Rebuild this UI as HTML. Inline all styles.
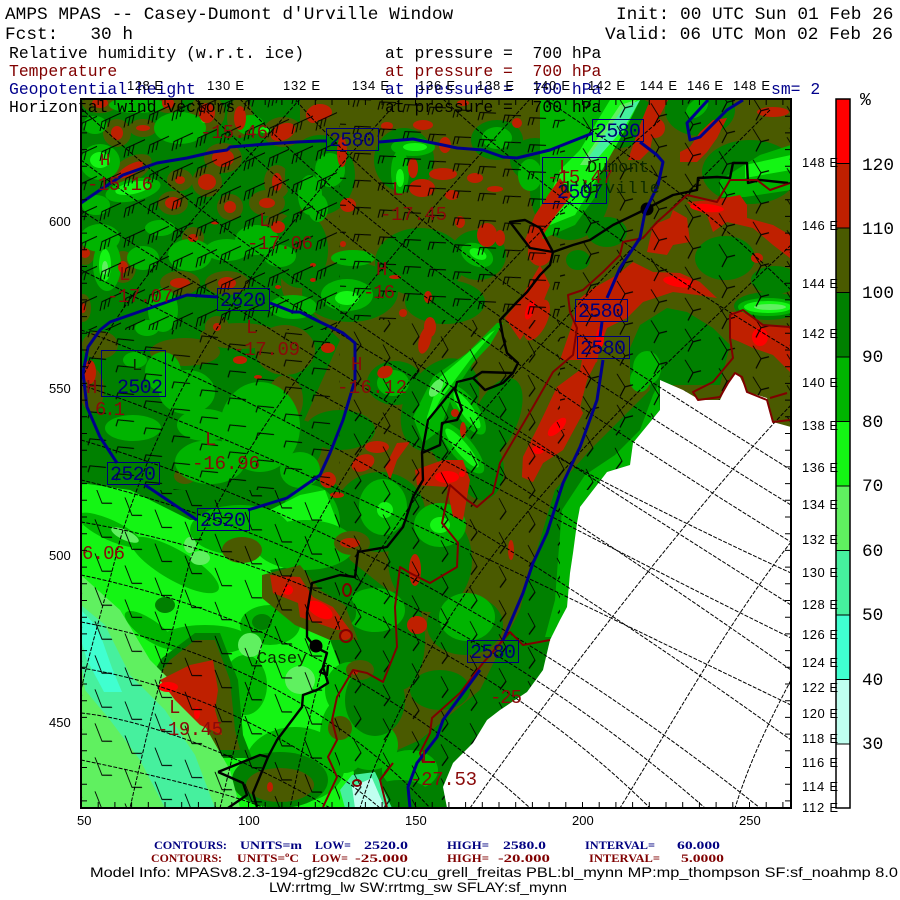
<!DOCTYPE html>
<html lang="en"><head><meta charset="utf-8"><title>AMPS MPAS</title>
<style>
html,body{margin:0;padding:0;background:#fff;width:900px;height:900px;overflow:hidden}
svg{display:block}
text{white-space:pre}
.m{font-family:"Liberation Mono",monospace}
.s{font-family:"Liberation Sans",sans-serif}
.r{font-family:"Liberation Serif",serif;font-size:12px;font-weight:bold}
.t{font-size:17.8px}.u{font-size:16.4px}
.ax{font-family:"Liberation Sans",sans-serif;font-size:13px;fill:#000}
.lb{font-family:"Liberation Mono",monospace;font-size:19px;fill:#8a0a0a}
.bl{font-family:"Liberation Mono",monospace;font-size:20px;fill:#00007a}
.bk{font-family:"Liberation Mono",monospace;font-size:17px;fill:#0c2a00}
</style></head><body>
<svg width="900" height="900" viewBox="0 0 900 900" xmlns="http://www.w3.org/2000/svg">
<defs>
<clipPath id="mp"><rect x="81" y="99" width="710" height="709"/></clipPath>
<pattern id="pA" width="24" height="30" patternUnits="userSpaceOnUse" patternTransform="skewY(-8) translate(2,4)"><path d="M23,6L4,12L2,21M8,11L6,20M12,10L10,18" fill="none" stroke="#000" stroke-width="1"/></pattern>
<pattern id="pB" width="25" height="27" patternUnits="userSpaceOnUse" patternTransform="skewY(6)"><path d="M21,7L5,8L3,16M9,8L7,15" fill="none" stroke="#000" stroke-width="1"/></pattern>
<pattern id="pC" width="34" height="31" patternUnits="userSpaceOnUse" patternTransform="skewY(14)"><path d="M5,3L13,14L8,25M13,14L21,10" fill="none" stroke="#000" stroke-width="1"/></pattern>
<pattern id="pD" width="28" height="27" patternUnits="userSpaceOnUse" patternTransform="skewY(16)"><path d="M22,5L6,8L4,15" fill="none" stroke="#000" stroke-width="1"/></pattern>
<pattern id="pE" width="29" height="34" patternUnits="userSpaceOnUse" patternTransform="skewY(24)"><path d="M6,4L13,14L7,25" fill="none" stroke="#000" stroke-width="1"/></pattern>
<pattern id="pF" width="30" height="34" patternUnits="userSpaceOnUse" patternTransform="skewY(22)"><path d="M5,5L12,20L22,16" fill="none" stroke="#000" stroke-width="1"/></pattern>
</defs>

<g clip-path="url(#mp)">
<rect x="81" y="99" width="710" height="709" fill="#008000"/>

<!-- olive -->
<g fill="#4a5a00">
<polygon points="300,99 791,99 791,428 660,410 600,470 570,520 520,610 480,690 420,740 375,760 375,730 400,690 420,640 400,600 350,560 330,500 300,480 300,430 340,340 300,300"/>
<ellipse cx="240" cy="118" rx="13" ry="20"/><ellipse cx="207" cy="113" rx="18" ry="18"/><ellipse cx="283" cy="132" rx="20" ry="15"/>
<ellipse cx="117" cy="133" rx="14" ry="14"/><ellipse cx="143" cy="128" rx="14" ry="9"/><ellipse cx="100" cy="103" rx="18" ry="10"/><ellipse cx="168" cy="103" rx="14" ry="10"/>
<ellipse cx="223" cy="158" rx="19" ry="15"/><ellipse cx="130" cy="170" rx="24" ry="12" transform="rotate(-30 130 170)"/>
<ellipse cx="180" cy="180" rx="13" ry="11"/><ellipse cx="207" cy="182" rx="15" ry="15"/><ellipse cx="277" cy="182" rx="13" ry="17"/>
<ellipse cx="173" cy="203" rx="15" ry="12"/><ellipse cx="230" cy="207" rx="13" ry="13"/><ellipse cx="267" cy="203" rx="18" ry="13"/>
<ellipse cx="278" cy="227" rx="15" ry="14"/><ellipse cx="193" cy="238" rx="11" ry="11"/><ellipse cx="123" cy="267" rx="13" ry="16"/>
<ellipse cx="180" cy="283" rx="20" ry="12"/><ellipse cx="227" cy="283" rx="22" ry="12"/><ellipse cx="85" cy="253" rx="10" ry="12"/>
<ellipse cx="83" cy="308" rx="8" ry="14"/><ellipse cx="217" cy="327" rx="12" ry="11"/><ellipse cx="295" cy="282" rx="14" ry="22"/>
<ellipse cx="100" cy="345" rx="18" ry="14"/><ellipse cx="240" cy="336" rx="40" ry="13"/><ellipse cx="185" cy="352" rx="35" ry="14"/>
<ellipse cx="285" cy="350" rx="30" ry="25"/><ellipse cx="285" cy="400" rx="18" ry="25"/><ellipse cx="235" cy="450" rx="8" ry="10"/><ellipse cx="185" cy="476" rx="11" ry="8"/>
<ellipse cx="92" cy="390" rx="12" ry="22"/>
<ellipse cx="245" cy="548" rx="22" ry="14"/><ellipse cx="345" cy="540" rx="28" ry="16"/>
</g>

<!-- dark over olive -->
<g fill="#008000">
<ellipse cx="320" cy="175" rx="35" ry="40"/><ellipse cx="420" cy="262" rx="45" ry="34"/><ellipse cx="350" cy="292" rx="48" ry="30"/>
<ellipse cx="404" cy="160" rx="30" ry="32"/><ellipse cx="497" cy="140" rx="26" ry="20"/><ellipse cx="478" cy="255" rx="28" ry="25"/>
<ellipse cx="535" cy="160" rx="25" ry="22"/><ellipse cx="445" cy="302" rx="40" ry="22"/><ellipse cx="300" cy="250" rx="28" ry="38"/>
<ellipse cx="380" cy="512" rx="45" ry="40"/><ellipse cx="310" cy="525" rx="42" ry="52"/><ellipse cx="340" cy="430" rx="35" ry="20"/><ellipse cx="300" cy="445" rx="22" ry="25"/>
<ellipse cx="395" cy="383" rx="28" ry="22"/>
<ellipse cx="440" cy="405" rx="35" ry="50" transform="rotate(30 440 405)"/>
<ellipse cx="460" cy="440" rx="30" ry="40" transform="rotate(-25 460 440)"/>
<polygon points="650,380 660,380 660,410 633,443 630,465 607,472 580,507 577,523 573,553 570,573 567,607 553,637 543,670 527,692 487,720 473,743 453,763 443,787 447,808 395,808 385,780 410,760 470,710 510,650 525,590 540,540 555,490 590,450 620,420 650,390"/>
<ellipse cx="430" cy="560" rx="42" ry="52"/><ellipse cx="482" cy="470" rx="22" ry="30"/><ellipse cx="495" cy="420" rx="22" ry="45" transform="rotate(25 495 420)"/>
<ellipse cx="465" cy="625" rx="38" ry="30"/><ellipse cx="400" cy="640" rx="25" ry="50"/><ellipse cx="440" cy="690" rx="30" ry="20"/>
<ellipse cx="700" cy="110" rx="35" ry="26"/><ellipse cx="750" cy="172" rx="48" ry="32"/><ellipse cx="607" cy="232" rx="20" ry="15"/><ellipse cx="578" cy="260" rx="12" ry="10"/>
<ellipse cx="725" cy="258" rx="30" ry="22"/><ellipse cx="775" cy="280" rx="24" ry="14"/>
<polygon points="640,325 667,308 687,312 713,328 730,345 720,385 660,385 630,385 630,348"/>
<ellipse cx="768" cy="306" rx="34" ry="14"/><ellipse cx="600" cy="120" rx="60" ry="30"/><ellipse cx="570" cy="190" rx="40" ry="50"/>
</g>

<!-- mid green: north and west -->
<g fill="#00b400">
<ellipse cx="137" cy="105" rx="28" ry="8"/><ellipse cx="180" cy="128" rx="26" ry="16"/><ellipse cx="100" cy="162" rx="20" ry="18"/>
<ellipse cx="133" cy="190" rx="28" ry="11" transform="rotate(-12 133 190)"/><ellipse cx="96" cy="205" rx="14" ry="10"/><ellipse cx="100" cy="238" rx="20" ry="14"/>
<ellipse cx="107" cy="265" rx="14" ry="26"/><ellipse cx="143" cy="258" rx="16" ry="12"/><ellipse cx="257" cy="240" rx="22" ry="15"/>
<ellipse cx="190" cy="255" rx="22" ry="16"/><ellipse cx="227" cy="250" rx="22" ry="11"/><ellipse cx="163" cy="310" rx="15" ry="22"/>
<ellipse cx="293" cy="307" rx="24" ry="12"/><ellipse cx="310" cy="195" rx="12" ry="20"/><ellipse cx="280" cy="256" rx="16" ry="11"/>
<ellipse cx="147" cy="328" rx="12" ry="8"/><ellipse cx="160" cy="228" rx="15" ry="8"/><ellipse cx="95" cy="125" rx="12" ry="9"/>
<ellipse cx="250" cy="125" rx="14" ry="10"/>
<ellipse cx="330" cy="170" rx="15" ry="17"/><ellipse cx="318" cy="208" rx="10" ry="14"/><ellipse cx="400" cy="172" rx="9" ry="22"/>
<ellipse cx="413" cy="147" rx="22" ry="9"/><ellipse cx="497" cy="138" rx="15" ry="11"/><ellipse cx="477" cy="255" rx="17" ry="11" transform="rotate(25 477 255)"/>
<ellipse cx="347" cy="295" rx="26" ry="16"/><ellipse cx="353" cy="258" rx="22" ry="8"/><ellipse cx="530" cy="175" rx="12" ry="16"/>
<ellipse cx="163" cy="372" rx="18" ry="20"/><ellipse cx="187" cy="392" rx="28" ry="22"/><ellipse cx="133" cy="428" rx="28" ry="13"/>
<ellipse cx="260" cy="427" rx="40" ry="45"/><ellipse cx="205" cy="425" rx="28" ry="16"/><ellipse cx="210" cy="462" rx="35" ry="22"/>
<ellipse cx="135" cy="360" rx="12" ry="8"/><ellipse cx="300" cy="470" rx="20" ry="18"/>
<ellipse cx="310" cy="523" rx="30" ry="38"/><ellipse cx="383" cy="507" rx="24" ry="28"/><ellipse cx="393" cy="383" rx="16" ry="13"/>
<ellipse cx="440" cy="525" rx="26" ry="22"/>
<polygon points="413,417 433,377 467,353 497,323 503,323 490,345 473,363 453,393 440,430 423,443"/>
<ellipse cx="467" cy="410" rx="29" ry="11" transform="rotate(55 467 410)"/>
<ellipse cx="462" cy="448" rx="32" ry="11" transform="rotate(50 462 448)"/>
<polygon points="540,99 640,99 620,130 590,165 600,190 575,225 540,240"/>
<ellipse cx="697" cy="108" rx="13" ry="8" transform="rotate(-40 697 108)"/>
<polygon points="720,180 760,155 791,145 791,190 745,197 720,197"/>
<ellipse cx="647" cy="368" rx="14" ry="17"/><ellipse cx="768" cy="307" rx="30" ry="9"/>
<polygon points="658,385 660,410 633,443 630,465 607,472 580,507 577,523 573,553 570,573 567,607 553,637 545,637 555,600 558,560 562,510 585,475 615,455 640,430 653,395"/>
<ellipse cx="467" cy="617" rx="28" ry="24"/><ellipse cx="640" cy="380" rx="10" ry="12"/>
</g>

<!-- lime in north + centre -->
<g fill="#14f514">
<ellipse cx="100" cy="160" rx="10" ry="8"/><ellipse cx="133" cy="188" rx="18" ry="6" transform="rotate(-12 133 188)"/>
<ellipse cx="105" cy="265" rx="6" ry="16"/><ellipse cx="205" cy="120" rx="4" ry="3"/><ellipse cx="265" cy="130" rx="6" ry="3"/>
<ellipse cx="400" cy="178" rx="4" ry="9"/><ellipse cx="415" cy="147" rx="12" ry="4"/><ellipse cx="347" cy="298" rx="12" ry="7"/>
<ellipse cx="478" cy="254" rx="9" ry="5" transform="rotate(25 478 254)"/>
<polygon points="427,417 440,377 460,360 490,333 495,330 470,360 440,400 425,430"/>
<ellipse cx="467" cy="410" rx="22" ry="6" transform="rotate(55 467 410)"/>
<ellipse cx="462" cy="448" rx="25" ry="6" transform="rotate(50 462 448)"/>
<polygon points="610,100 640,100 625,130 605,165 590,190 575,215 550,225 548,200 560,170 580,150"/>
<polygon points="745,165 791,155 791,170 745,178"/>
<ellipse cx="768" cy="307" rx="24" ry="6"/><ellipse cx="440" cy="525" rx="10" ry="8"/>
<ellipse cx="385" cy="510" rx="8" ry="8"/><ellipse cx="305" cy="530" rx="14" ry="15"/>
</g>
<g fill="#60f060">
<ellipse cx="105" cy="268" rx="3" ry="7"/><ellipse cx="436" cy="388" rx="5" ry="10" transform="rotate(35 436 388)"/>
<polygon points="620,105 636,100 618,132 590,165 580,165"/>
<ellipse cx="770" cy="307" rx="16" ry="3"/>
</g>
<g fill="#46f09e"><polygon points="624,107 640,100 624,128 596,160 588,158"/></g>

<!-- SW zone -->
<polygon fill="#14f514" points="81,483 130,490 190,520 250,520 300,495 325,490 340,530 300,565 270,570 300,625 330,640 345,680 330,710 350,760 365,808 81,808"/>
<g fill="#00b400">
<ellipse cx="110" cy="530" rx="35" ry="10" transform="rotate(25 110 530)"/><ellipse cx="175" cy="565" rx="50" ry="15" transform="rotate(30 175 565)"/>
<ellipse cx="150" cy="630" rx="30" ry="10" transform="rotate(35 150 630)"/><ellipse cx="270" cy="625" rx="30" ry="20"/><ellipse cx="205" cy="640" rx="45" ry="15"/>
<ellipse cx="245" cy="685" rx="22" ry="30"/><ellipse cx="295" cy="765" rx="50" ry="38"/><ellipse cx="345" cy="735" rx="25" ry="38"/>
<ellipse cx="240" cy="530" rx="50" ry="25"/><ellipse cx="305" cy="545" rx="50" ry="25"/><ellipse cx="375" cy="610" rx="30" ry="22"/>
<ellipse cx="350" cy="690" rx="25" ry="28"/><ellipse cx="370" cy="745" rx="28" ry="25"/><ellipse cx="410" cy="770" rx="28" ry="20"/>
</g>
<g fill="#60f060">
<ellipse cx="125" cy="535" rx="15" ry="5" transform="rotate(25 125 535)"/><ellipse cx="200" cy="558" rx="10" ry="7"/><ellipse cx="250" cy="645" rx="12" ry="12"/>
<ellipse cx="300" cy="680" rx="15" ry="14"/><ellipse cx="190" cy="545" rx="6" ry="8"/><ellipse cx="330" cy="600" rx="6" ry="6"/>
</g>
<g fill="#008000">
<polygon points="140,695 162,658 195,633 220,633 238,680 243,735 252,758 215,758 180,738 152,718"/>
<ellipse cx="280" cy="780" rx="48" ry="28"/><ellipse cx="315" cy="600" rx="44" ry="24" transform="rotate(25 315 600)"/>
<ellipse cx="262" cy="622" rx="10" ry="8"/><ellipse cx="165" cy="605" rx="10" ry="8"/><ellipse cx="375" cy="700" rx="30" ry="36"/>
<ellipse cx="400" cy="795" rx="30" ry="15"/>
</g>
<g fill="#4a5a00">
<polygon points="148,690 170,660 195,640 215,640 230,680 235,730 240,750 215,750 185,730 160,715"/>
<ellipse cx="280" cy="785" rx="34" ry="17"/><ellipse cx="340" cy="728" rx="12" ry="12"/>
<polygon points="262,575 300,565 320,590 345,605 358,640 330,640 295,625 262,598"/>
<ellipse cx="352" cy="543" rx="18" ry="12"/><ellipse cx="242" cy="550" rx="20" ry="13"/>
<ellipse cx="360" cy="670" rx="14" ry="10"/>
</g>
<polygon fill="#60f060" points="81,575 120,610 150,660 190,700 230,770 240,808 81,808"/>
<polygon fill="#46f09e" points="81,605 105,625 130,675 165,710 195,755 215,808 165,808 140,760 110,720 85,690 81,660"/>
<polygon fill="#40ffd0" points="81,610 98,628 112,668 122,692 104,692 87,660 81,640"/>
<polygon fill="#46f09e" points="340,790 352,775 375,772 392,808 345,808"/>
<polygon fill="#c0fff0" points="352,787 372,778 385,808 355,808"/>

<!-- brick -->
<g fill="#bf2000">
<ellipse cx="240" cy="118" rx="6" ry="12"/><ellipse cx="207" cy="113" rx="8" ry="10"/><ellipse cx="283" cy="132" rx="13" ry="8" transform="rotate(-25 283 132)"/>
<ellipse cx="313" cy="115" rx="7" ry="8"/><ellipse cx="117" cy="133" rx="6" ry="7"/><ellipse cx="143" cy="128" rx="7" ry="3"/><ellipse cx="100" cy="103" rx="8" ry="5"/><ellipse cx="168" cy="103" rx="6" ry="6"/>
<ellipse cx="223" cy="158" rx="11" ry="9"/><ellipse cx="130" cy="170" rx="15" ry="5" transform="rotate(-30 130 170)"/><ellipse cx="180" cy="180" rx="5" ry="4"/>
<ellipse cx="207" cy="182" rx="9" ry="8"/><ellipse cx="277" cy="182" rx="5" ry="9"/><ellipse cx="173" cy="203" rx="8" ry="6"/><ellipse cx="230" cy="207" rx="6" ry="6"/>
<ellipse cx="267" cy="203" rx="8" ry="5"/><ellipse cx="278" cy="227" rx="7" ry="6"/><ellipse cx="215" cy="223" rx="4" ry="1.5"/><ellipse cx="193" cy="238" rx="5" ry="4"/>
<ellipse cx="123" cy="267" rx="5" ry="6"/><ellipse cx="180" cy="283" rx="10" ry="5"/><ellipse cx="227" cy="283" rx="9" ry="6"/><ellipse cx="85" cy="253" rx="5" ry="5"/>
<ellipse cx="83" cy="308" rx="3" ry="5"/><ellipse cx="217" cy="327" rx="4" ry="4"/><ellipse cx="278" cy="287" rx="3" ry="2"/><ellipse cx="313" cy="265" rx="3" ry="2"/><ellipse cx="313" cy="280" rx="3" ry="2"/>
<ellipse cx="240" cy="360" rx="7" ry="4"/><ellipse cx="258" cy="377" rx="4" ry="2"/><ellipse cx="90" cy="372" rx="6" ry="12"/>
<ellipse cx="320" cy="112" rx="12" ry="8"/><ellipse cx="423" cy="125" rx="10" ry="5"/><ellipse cx="387" cy="126" rx="6" ry="4"/><ellipse cx="413" cy="168" rx="5" ry="10"/>
<ellipse cx="443" cy="174" rx="14" ry="6"/><ellipse cx="422" cy="188" rx="13" ry="9"/><ellipse cx="475" cy="178" rx="8" ry="5"/><ellipse cx="495" cy="189" rx="8" ry="3"/>
<ellipse cx="452" cy="195" rx="7" ry="5"/><ellipse cx="348" cy="205" rx="8" ry="7"/><ellipse cx="460" cy="222" rx="5" ry="6"/><ellipse cx="487" cy="235" rx="10" ry="12"/>
<ellipse cx="500" cy="238" rx="5" ry="8"/><ellipse cx="343" cy="244" rx="3" ry="3"/><ellipse cx="445" cy="145" rx="6" ry="8"/><ellipse cx="342" cy="152" rx="5" ry="15"/>
<ellipse cx="517" cy="123" rx="5" ry="5"/><ellipse cx="463" cy="103" rx="6" ry="3"/><ellipse cx="428" cy="297" rx="4" ry="6"/><ellipse cx="395" cy="277" rx="6" ry="2"/>
<ellipse cx="403" cy="313" rx="4" ry="4"/><ellipse cx="430" cy="327" rx="6" ry="10"/><ellipse cx="537" cy="320" rx="10" ry="22" transform="rotate(25 537 320)"/>
<polygon points="650,100 668,100 655,125 650,150 640,160 628,160 640,125"/>
<polygon points="727,118 717,138 707,152 697,162 680,162 680,152 690,147 700,132 713,120"/>
<ellipse cx="773" cy="112" rx="16" ry="5"/><ellipse cx="655" cy="128" rx="10" ry="10"/>
<polygon points="687,202 713,200 740,195 747,205 747,218 773,225 790,235 790,258 773,245 753,228 727,222 713,232 707,215 693,208"/>
<polygon points="673,210 687,218 690,242 673,245 667,255 647,252 653,225 670,218"/>
<polygon points="617,275 633,262 653,272 680,273 700,282 717,298 697,295 673,292 643,302 627,318 607,328 600,348 597,362 580,370 557,387 540,423 523,457 522,477 533,482 543,463 563,450 583,413 580,407 587,380 597,360 560,360 572,325 578,300 590,290"/>
<polygon points="597,360 587,380 580,407 583,413 563,450 543,463 533,482 522,477 523,457 540,423 557,387 580,370 585,345"/>
<polygon points="730,312 743,312 763,325 790,328 790,372 773,355 753,348 740,342 730,338"/>
<polygon points="560,178 572,195 556,215 545,232 535,255 525,240 535,215 548,195"/>
<polygon points="520,300 540,265 550,285 540,310 520,340 505,318"/>
<ellipse cx="540" cy="252" rx="12" ry="14"/><ellipse cx="757" cy="258" rx="6" ry="5"/>
<polygon points="415,470 443,460 463,460 470,480 463,520 453,517 447,487 417,485"/>
<polygon points="410,442 397,443 385,467 390,480 397,460"/>
<ellipse cx="363" cy="463" rx="12" ry="8" transform="rotate(-25 363 463)"/><ellipse cx="377" cy="447" rx="12" ry="6"/><ellipse cx="328" cy="480" rx="8" ry="8"/><ellipse cx="337" cy="495" rx="7" ry="3"/>
<ellipse cx="425" cy="340" rx="6" ry="14" transform="rotate(15 425 340)"/><ellipse cx="350" cy="543" rx="10" ry="5"/><ellipse cx="511" cy="550" rx="3" ry="10"/>
<ellipse cx="385" cy="372" rx="8" ry="6" transform="rotate(-25 385 372)"/><ellipse cx="328" cy="348" rx="7" ry="5"/><ellipse cx="463" cy="430" rx="3" ry="8"/><ellipse cx="455" cy="413" rx="4" ry="4"/>
<polygon points="160,680 190,665 213,660 218,690 215,710 222,735 200,725 190,715 175,700"/>
<polygon points="270,575 300,577 313,597 333,607 350,630 337,630 300,617 298,603 273,593"/>
<ellipse cx="270" cy="787" rx="3" ry="5"/><ellipse cx="355" cy="672" rx="3" ry="3"/><ellipse cx="345" cy="635" rx="6" ry="5"/>
<ellipse cx="417" cy="625" rx="10" ry="9"/><ellipse cx="415" cy="570" rx="6" ry="16"/>
</g>
<g fill="#ff0000">
<ellipse cx="707" cy="208" rx="17" ry="4" transform="rotate(5 707 208)"/><ellipse cx="678" cy="282" rx="15" ry="5" transform="rotate(10 678 282)"/>
<ellipse cx="760" cy="337" rx="8" ry="9"/><ellipse cx="557" cy="427" rx="12" ry="5" transform="rotate(-45 557 427)"/><ellipse cx="538" cy="450" rx="6" ry="4"/>
<ellipse cx="447" cy="477" rx="12" ry="6"/><ellipse cx="168" cy="687" rx="10" ry="5"/><ellipse cx="197" cy="713" rx="3" ry="6"/><ellipse cx="288" cy="590" rx="5" ry="5"/>
<ellipse cx="320" cy="610" rx="14" ry="7" transform="rotate(30 320 610)"/><ellipse cx="600" cy="338" rx="4" ry="10"/><ellipse cx="530" cy="310" rx="4" ry="10" transform="rotate(20 530 310)"/>
<ellipse cx="462" cy="474" rx="3" ry="3"/>
</g>

<!-- wind barbs -->
<rect x="81" y="100" width="259" height="230" fill="url(#pA)"/>
<rect x="340" y="100" width="220" height="220" fill="url(#pB)"/>
<rect x="560" y="100" width="231" height="330" fill="url(#pC)"/>
<rect x="81" y="330" width="259" height="160" fill="url(#pD)"/>
<rect x="340" y="320" width="220" height="488" fill="url(#pE)"/>
<rect x="560" y="430" width="100" height="60" fill="url(#pE)"/>
<rect x="81" y="490" width="259" height="318" fill="url(#pF)"/>

<!-- no-data white -->
<polygon fill="#fff" points="791,427 773,422 767,398 747,392 740,377 735,373 728,383 720,400 700,400 683,390 660,380 660,410 633,443 630,465 607,472 580,507 577,523 573,553 570,573 567,607 560,620 550,640 543,670 527,692 500,710 487,720 473,743 453,763 443,787 447,808 791,808"/>

<!-- grid -->
<g fill="none" stroke="#000" stroke-width="1" stroke-dasharray="4 1.5">
<path d="M545,99C620,150 700,200 791,290"/><path d="M443,99C530,180 650,265 791,350"/><path d="M300,105C420,240 600,350 791,470"/>
<path d="M195,99C330,240 560,400 791,542"/><path d="M81,108C230,250 500,420 791,605"/><path d="M81,210C200,290 480,450 791,670"/>
<path d="M81,330C250,390 500,530 791,740"/><path d="M81,440C250,490 500,600 760,808"/><path d="M81,522C250,550 480,640 650,808"/>
<path d="M81,575C250,610 400,690 530,808"/><path d="M81,622C230,650 350,720 430,808"/><path d="M81,713C150,720 250,760 330,808"/><path d="M81,760C130,770 220,790 265,808"/>
<path d="M240,99C370,240 580,375 791,505"/><path d="M81,160C225,270 490,435 791,573"/><path d="M81,270C225,340 490,490 791,638"/><path d="M81,385C250,440 500,565 791,705"/><path d="M81,480C250,520 490,620 705,808"/><path d="M81,668C190,685 300,740 380,808"/>
<path d="M300,99C220,190 130,280 81,380"/><path d="M400,99C300,210 180,340 120,540C105,600 90,650 81,690"/><path d="M530,99C420,220 260,400 190,560C170,640 150,720 130,808"/>
<path d="M660,120C500,260 340,430 260,650C245,700 232,760 220,808"/><path d="M770,110C620,260 420,450 330,640C315,690 300,760 290,808"/>
<path d="M791,245C660,370 480,530 405,700C385,740 372,770 360,808"/><path d="M791,405C700,500 560,680 470,808"/><path d="M791,542C730,620 680,710 620,808"/><path d="M791,680C770,720 750,760 735,808"/>
</g>

<!-- coast -->
<g fill="none" stroke="#000" stroke-width="2.4" stroke-linejoin="round">
<path d="M257,807L253,793L268,757L277,740L302,707L303,695L317,690L328,683L323,667L327,653L315,647L307,637L307,613L312,583L340,575L355,577L358,552L387,547L403,527L413,497L423,480L422,453L440,445L442,423L457,420L462,410L455,390L457,382L473,378L482,372L513,373L518,363L507,353L503,337L500,320L517,302L527,292L540,275L550,265L553,252L540,228L525,220L510,222L530,248L553,252L573,245L590,240L613,225L640,212L673,195L697,190L698,178L717,177L730,178L733,163L747,163L748,183L760,180L788,183"/>
<path d="M422,453L428,420L455,387M473,378L485,390L503,383L513,373"/>
<path d="M218,772L260,755L268,757M218,772L243,783L247,795L228,808"/>
<path d="M325,665L320,672L327,675L328,665"/>
</g>
<circle cx="647" cy="209" r="6.5" fill="#000"/><circle cx="316" cy="646" r="6.5" fill="#000"/>

<!-- temperature -->
<g fill="none" stroke="#800000" stroke-width="2" stroke-linejoin="round">
<path d="M790,183L770,190L757,180L730,180L717,202L700,198L687,195L673,208L657,222L643,238L623,242L620,255L603,272L583,290L568,295L570,312L577,328L573,355L553,372L533,407L500,463L493,493L477,507L467,500L450,485L442,523L458,543L457,567L430,583L410,573L400,567L395,607L397,647L383,682L367,673L353,670L337,697L332,720L337,740L328,757L337,777L323,807"/>
<path d="M550,640L523,645L510,632L483,663L460,693L432,718L430,733L420,753L423,762L435,762"/>
<path d="M393,763L380,780L387,808"/>
<path d="M730,338L730,315L743,310L763,325L790,327M730,338L733,358L713,382L693,392L698,400L720,397L728,383L735,373L742,377L747,392L767,400L773,422L790,420M770,398L787,393"/>
<ellipse cx="357" cy="783" rx="4" ry="3"/><ellipse cx="347" cy="590" rx="4" ry="6"/><ellipse cx="346" cy="636" rx="6" ry="6"/>
</g>

<!-- geopotential -->
<g fill="none" stroke="#00008b" stroke-width="3" stroke-linejoin="round">
<path d="M81,203L100,190L123,175L157,163L187,158L213,152L227,150L230,147L267,144L297,142L320,141L326,141M379,142L413,139L443,145L457,148L483,150L503,157L517,158L550,150L593,133M640,142L657,155L663,162L658,185L645,212L640,238L620,268L607,298M602,322L600,337M603,360L597,400L580,447L563,483L547,533L533,563L523,593L503,640M480,670L463,693L443,720L437,737L417,763L408,787L410,808"/>
<path d="M708,100L687,123L690,140L700,137L727,110L743,100"/>
<path d="M217,297L187,295L150,308L110,322L100,330L88,347L83,373L87,407L100,437L117,463M145,485L157,493L197,520M248,510L287,498L320,475L330,453L343,420L355,380L355,343L343,333L320,322L300,312L293,312L270,303"/>
</g>
<g fill="none" stroke="#00007a" stroke-width="1">
<rect x="326.500" y="128.500" width="52" height="22"/><rect x="592.500" y="119.500" width="51" height="22"/><rect x="575.500" y="299.500" width="52" height="22"/>
<rect x="577.500" y="336.500" width="52" height="22"/><rect x="467.500" y="640.500" width="51" height="22"/><rect x="217.500" y="288.500" width="52" height="22"/>
<rect x="107.500" y="462.500" width="52" height="22"/><rect x="197.500" y="508.500" width="52" height="22"/><rect x="101.500" y="350.500" width="64" height="46"/><rect x="542.500" y="157.500" width="64" height="46"/>
</g>
<g class="bl">
<text x="329" y="146" textLength="46">2580</text><text x="595" y="137" textLength="46">2580</text><text x="578" y="317" textLength="46">2580</text>
<text x="580" y="354" textLength="46">2580</text><text x="470" y="658" textLength="46">2580</text><text x="220" y="306" textLength="46">2520</text>
<text x="110" y="480" textLength="46">2520</text><text x="200" y="526" textLength="46">2520</text><text x="117" y="393" textLength="46">2502</text><text x="557" y="198" textLength="46">2507</text>
</g>
<g class="lb">
<text x="200" y="138" textLength="68">-15.46</text><text x="100" y="165" style="font-size:17px">H</text><text x="87" y="190" textLength="66">-15.16</text>
<text x="392" y="195">L</text><text x="380" y="220" textLength="67">-17.45</text><text x="259" y="226">L</text><text x="247" y="249" textLength="66">-17.06</text>
<text x="119" y="280">L</text><text x="107" y="302" textLength="66">-17.07</text><text x="246" y="333">L</text><text x="233" y="355" textLength="67">-17.09</text>
<text x="376" y="275">H</text><text x="363" y="298" textLength="32">-16</text><text x="351" y="370">H</text><text x="337" y="393" textLength="70">-16.12</text>
<text x="86" y="393">H</text><text x="95" y="415" textLength="30">6.1</text><text x="205" y="445">L</text><text x="192" y="469" textLength="68">-16.96</text>
<text x="82" y="559" textLength="43">6.06</text><text x="169" y="713">L</text><text x="157" y="735" textLength="66">-19.45</text><text x="490" y="703" textLength="32">-25</text>
<text x="421" y="763">L</text><text x="410" y="785" textLength="67">-27.53</text><text x="559" y="173">L</text><text x="547" y="183" textLength="66">-15.47</text>
</g>
<g class="bk">
<text x="132" y="370">L</text><text x="587" y="172" textLength="62">Dumont</text><text x="560" y="193" textLength="100">d'Urville</text><text x="257" y="663" textLength="50">Casey</text>
</g>

<!-- ticks -->
<g stroke="#000" stroke-width="6" fill="none" stroke-dasharray="1 15.7">
<line x1="81" y1="102" x2="791" y2="102"/><line x1="81" y1="805" x2="791" y2="805"/>
<line x1="84" y1="99" x2="84" y2="808"/><line x1="788" y1="99" x2="788" y2="808"/>
</g>
</g>
<rect x="81" y="99" width="710" height="709" fill="none" stroke="#000" stroke-width="2"/>

<!-- colour bar -->
<rect x="836" y="99" width="14" height="64.500" fill="#ff0000"/><rect x="836" y="163.500" width="14" height="64.500" fill="#bf2000"/>
<rect x="836" y="228" width="14" height="64.500" fill="#4a5a00"/><rect x="836" y="292.500" width="14" height="64.500" fill="#008000"/>
<rect x="836" y="357" width="14" height="64.500" fill="#00b400"/><rect x="836" y="421.500" width="14" height="64.500" fill="#14f514"/>
<rect x="836" y="486" width="14" height="64.500" fill="#60f060"/><rect x="836" y="550.500" width="14" height="64.500" fill="#46f09e"/>
<rect x="836" y="615" width="14" height="64.500" fill="#40ffd0"/><rect x="836" y="679.500" width="14" height="64.500" fill="#c0fff0"/>
<rect x="836" y="744" width="14" height="64" fill="#fff"/>
<g stroke="#000" stroke-width="1"><line x1="836" y1="163.500" x2="850" y2="163.500"/><line x1="836" y1="228" x2="850" y2="228"/><line x1="836" y1="292.500" x2="850" y2="292.500"/><line x1="836" y1="357" x2="850" y2="357"/><line x1="836" y1="421.500" x2="850" y2="421.500"/><line x1="836" y1="486" x2="850" y2="486"/><line x1="836" y1="550.500" x2="850" y2="550.500"/><line x1="836" y1="615" x2="850" y2="615"/><line x1="836" y1="679.500" x2="850" y2="679.500"/><line x1="836" y1="744" x2="850" y2="744"/></g>
<rect x="836" y="99" width="14" height="709" fill="none" stroke="#000" stroke-width="1.500"/>
<g class="m t" fill="#000">
<text x="862" y="170">120</text><text x="862" y="234">110</text><text x="862" y="298">100</text><text x="862" y="362">90</text><text x="862" y="427">80</text><text x="862" y="491">70</text><text x="862" y="556">60</text><text x="862" y="620">50</text><text x="862" y="685">40</text><text x="862" y="749">30</text>
</g>
<text x="860" y="105" class="m" font-size="18" fill="#000">%</text>

<!-- header -->
<g class="m t" fill="#000">
<text x="5" y="19">AMPS MPAS -- Casey-Dumont d'Urville Window</text>
<text x="5" y="39">Fcst:   30 h</text>
<text x="616" y="19">Init: 00 UTC Sun 01 Feb 26</text>
<text x="605" y="39">Valid: 06 UTC Mon 02 Feb 26</text>
</g>
<g class="m u">
<text x="9" y="58" fill="#000">Relative humidity (w.r.t. ice)</text><text x="385" y="58" fill="#000">at pressure =  700 hPa</text>
<text x="9" y="76" fill="#800000">Temperature</text><text x="385" y="76" fill="#800000">at pressure =  700 hPa</text>
<text x="9" y="94" fill="#00008b">Geopotential height</text><text x="385" y="94" fill="#00008b">at pressure =  700 hPa</text>
<text x="9" y="112" fill="#000">Horizontal wind vectors</text><text x="385" y="112" fill="#000">at pressure =  700 hPa</text>
<text x="771" y="94" fill="#00008b">sm= 2</text>
</g>

<!-- axes -->
<g class="ax">
<text x="127" y="90" textLength="36">128 E</text><text x="207" y="90" textLength="37">130 E</text><text x="283" y="90" textLength="37">132 E</text><text x="352" y="90" textLength="37">134 E</text><text x="418" y="90" textLength="37">136 E</text><text x="477" y="90" textLength="37">138 E</text><text x="533" y="90" textLength="37">140 E</text><text x="588" y="90" textLength="37">142 E</text><text x="640" y="90" textLength="37">144 E</text><text x="687" y="90" textLength="36">146 E</text><text x="733" y="90" textLength="37">148 E</text>
<text x="802" y="167" textLength="36">148 E</text><text x="802" y="230" textLength="36">146 E</text><text x="802" y="288" textLength="36">144 E</text><text x="802" y="338" textLength="36">142 E</text><text x="802" y="387" textLength="36">140 E</text><text x="802" y="430" textLength="36">138 E</text><text x="802" y="472" textLength="36">136 E</text><text x="802" y="509" textLength="36">134 E</text><text x="802" y="544" textLength="36">132 E</text><text x="802" y="577" textLength="36">130 E</text><text x="802" y="609" textLength="36">128 E</text><text x="802" y="639" textLength="36">126 E</text><text x="802" y="667" textLength="36">124 E</text><text x="802" y="692" textLength="36">122 E</text><text x="802" y="718" textLength="36">120 E</text><text x="802" y="743" textLength="36">118 E</text><text x="802" y="767" textLength="36">116 E</text><text x="802" y="791" textLength="36">114 E</text><text x="802" y="812" textLength="36">112 E</text>
<text x="49" y="226">600</text><text x="49" y="393">550</text><text x="49" y="560">500</text><text x="49" y="727">450</text>
<text x="77" y="825">50</text><text x="238" y="825">100</text><text x="405" y="825">150</text><text x="572" y="825">200</text><text x="739" y="825">250</text>
</g>

<!-- footer -->
<g class="r" fill="#000080">
<text x="154" y="849" textLength="73" lengthAdjust="spacingAndGlyphs">CONTOURS:</text><text x="240" y="849" textLength="62" lengthAdjust="spacingAndGlyphs">UNITS=m</text><text x="315" y="849" textLength="36" lengthAdjust="spacingAndGlyphs">LOW=</text><text x="364" y="849" textLength="44" lengthAdjust="spacingAndGlyphs">2520.0</text><text x="447" y="849" textLength="42" lengthAdjust="spacingAndGlyphs">HIGH=</text><text x="503" y="849" textLength="43" lengthAdjust="spacingAndGlyphs">2580.0</text><text x="585" y="849" textLength="70" lengthAdjust="spacingAndGlyphs">INTERVAL=</text><text x="677" y="849" textLength="43" lengthAdjust="spacingAndGlyphs">60.000</text>
</g>
<g class="r" fill="#800000">
<text x="151" y="862" textLength="71" lengthAdjust="spacingAndGlyphs">CONTOURS:</text><text x="237" y="862" textLength="62" lengthAdjust="spacingAndGlyphs">UNITS=ºC</text><text x="312" y="862" textLength="36" lengthAdjust="spacingAndGlyphs">LOW=</text><text x="355" y="862" textLength="53" lengthAdjust="spacingAndGlyphs">-25.000</text><text x="447" y="862" textLength="42" lengthAdjust="spacingAndGlyphs">HIGH=</text><text x="498" y="862" textLength="52" lengthAdjust="spacingAndGlyphs">-20.000</text><text x="589" y="862" textLength="71" lengthAdjust="spacingAndGlyphs">INTERVAL=</text><text x="681" y="862" textLength="43" lengthAdjust="spacingAndGlyphs">5.0000</text>
</g>
<text x="90" y="877" class="s" font-size="14" fill="#000" textLength="808" lengthAdjust="spacingAndGlyphs">Model Info: MPASv8.2.3-194-gf29cd82c CU:cu_grell_freitas PBL:bl_mynn MP:mp_thompson SF:sf_noahmp 8.0</text>
<text x="269" y="892" class="s" font-size="14" fill="#000" textLength="298" lengthAdjust="spacingAndGlyphs">LW:rrtmg_lw SW:rrtmg_sw SFLAY:sf_mynn</text>
</svg>
</body></html>
